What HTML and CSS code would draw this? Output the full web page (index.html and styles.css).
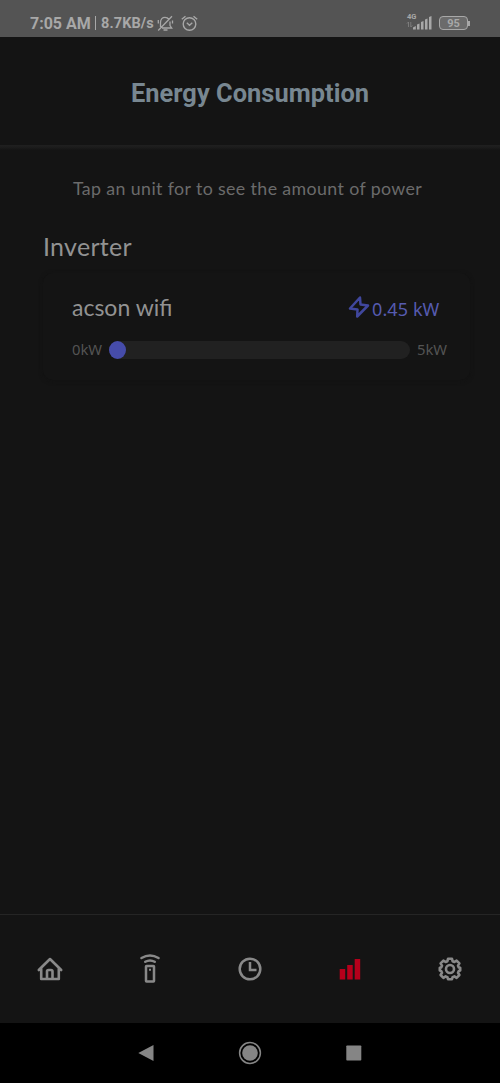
FILE: index.html
```html
<!DOCTYPE html>
<html lang="en">
<head>
<meta charset="utf-8">
<title>Energy Consumption</title>
<link rel="stylesheet" href="styles.css">
</head>
<body>
<div class="screen">
  <div class="status">
    <span class="time">7:05 AM</span><span class="sep"></span><span class="speed">8.7KB/s</span>
    <svg class="bell" width="17" height="17" viewBox="0 0 17 17" fill="none" stroke="#a8a8a8" stroke-width="1.3"><path d="M3.5 12V7.5C3.5 4 5.5 2.3 8 2.3c1.600 0 3 .7 3.800 2M13 6.500V10.500l1.700 2.500H5M6.500 15h4M15 1.200L1.200 15.500M1.300 5v3.500M15.500 5.500v3"/></svg>
    <svg class="alarm" width="17" height="17" viewBox="0 0 17 17" fill="none" stroke="#a8a8a8" stroke-width="1.400"><circle cx="8.500" cy="9" r="6.300"/><path d="M.8 4.200L4.500 1.200M16.200 4.200L12.500 1.200M5.800 7.800l2.700 2.400 2.800-2.400"/></svg>
    <div class="network"><span class="gen">4G</span>
      <svg width="8" height="7" viewBox="0 0 8 7" fill="none" stroke="#858585" stroke-width=".8"><path d="M2.500 6V1L1 2.500M4.800 1v5l1.500-1.500"/></svg>
    </div>
    <svg class="signal" width="19" height="14" viewBox="0 0 19 14" fill="#a8a8a8"><path d="M0 11.500l2.800-1.500v3.500H0zM4 8.500l2.500-1v6H4zM8 6l2.500-1v8.500H8zM12 3.500l2.500-1v11H12zM16 1l2.500-1v13.500H16z"/></svg>
    <div class="battery"><span class="level">95</span></div><span class="battery-tip"></span>
  </div>
  <header class="header"><h1 class="title">Energy Consumption</h1></header>
  <main class="content">
    <p class="hint">Tap an unit for to see the amount of power</p>
    <h2 class="group">Inverter</h2>
    <section class="card">
      <div class="unit">
        <span class="name">acson wifi</span>
        <svg class="bolt" width="22" height="22" viewBox="0 0 22 22" fill="none" stroke="#40479d" stroke-width="2.500" stroke-linejoin="round"><path d="M12 1.500L2 12.500l7.500 1-.3 7L20 9.500l-7.500-1z"/></svg>
        <span class="power">0.45 kW</span>
      </div>
      <div class="usage">
        <span class="min">0kW</span>
        <div class="track"><div class="fill"></div></div>
        <span class="max">5kW</span>
      </div>
    </section>
  </main>
  <nav class="tabs">
    <div class="tab"><svg width="28" height="28" viewBox="0 0 28 28" fill="none" stroke="#898989" stroke-width="2.600" stroke-linecap="round" stroke-linejoin="round"><path d="M2.800 15L14 4l11.200 11M5.200 13.500V24h17.600V13.500M11 24v-7.500q0-1.500 1.500-1.500h2.500q1.500 0 1.500 1.500V24"/></svg></div>
    <div class="tab"><svg width="28" height="32" viewBox="0 0 28 32" fill="none" stroke="#898989" stroke-width="2.500"><path d="M5.500 5q8.500-5 17 0M9.300 8.800q4.700-2.800 9.400 0" stroke-linecap="round"/><rect x="10" y="13" width="8" height="15.500" rx=".5"/><path d="M14 15.800v2" stroke-width="2"/></svg></div>
    <div class="tab"><svg width="28" height="28" viewBox="0 0 28 28" fill="none" stroke="#898989" stroke-width="2.500"><circle cx="14" cy="14" r="10.300"/><path d="M14 7v8h6.500" stroke-width="2.500"/></svg></div>
    <div class="tab"><svg width="28" height="28" viewBox="0 0 28 28" fill="#b5001b"><path d="M3.700 14h5.500v10.500H3.700zM11.200 10h5.500v14.500h-5.500zM18.700 4h5.500v20.500h-5.500z"/></svg></div>
    <div class="tab"><svg width="28" height="28" viewBox="0 0 28 28" fill="none" stroke="#898989" stroke-width="2.600" stroke-linejoin="round"><path d="M12 3.800h4l.6 2.400 1.800.8 2.200-1.400 2.800 2.800L22 10.600l.8 1.800 1.400.4v2.800l-1.400.4-.8 1.800 1.400 2.200-2.800 2.800-2.200-1.400-1.800.8-.6 2h-4l-.6-2-1.800-.8-2.200 1.400L4.600 20 6 17.800 5.200 16l-1.400-.4v-2.800l1.400-.4.8-1.800-1.400-2.200 2.800-2.800L9.600 7l1.800-.8z"/><circle cx="14" cy="14" r="4"/></svg></div>
  </nav>
  <div class="system">
    <svg width="16" height="18" viewBox="0 0 16 18" fill="#858585"><path d="M15.500 1v16L.3 9z"/></svg>
    <svg width="24" height="24" viewBox="0 0 24 24"><circle cx="12" cy="12" r="10.400" fill="none" stroke="#858585" stroke-width="1.500"/><circle cx="12" cy="12" r="7.800" fill="#858585"/></svg>
    <svg width="16" height="16" viewBox="0 0 16 16"><rect x=".3" y=".5" width="15" height="15" rx=".8" fill="#858585"/></svg>
  </div>
</div>
</body>
</html>
```
FILE: styles.css
```css
* { box-sizing: border-box; }
body { margin: 0; background: #141414; font-family: Lato, sans-serif; }
.screen { width: 500px; height: 1083px; display: flex; flex-direction: column; background: #141414; overflow: hidden; }
.status { height: 37px; flex: none; display: flex; align-items: center; padding: 9px 30px 0 30px; background: #545454; color: #a8a8a8; font-family: Roboto, sans-serif; font-weight: 700; white-space: nowrap; }
.time { width: 61px; font-size: 16px; }
.sep { width: 1px; height: 14px; margin: 0 5px 0 4px; background: #a8a8a8; }
.speed { width: 53px; font-size: 14.500px; letter-spacing: .1px; }
.bell { margin-left: 3px; }
.alarm { margin-left: 7px; }
.network { display: flex; flex-direction: column; width: 12px; margin-left: auto; margin-top: -5px; }
.gen { font-size: 7.500px; line-height: 8px; padding-left: 1px; }
.signal { margin-left: -5px; margin-right: 7px; margin-top: -1px; }
.battery { display: flex; align-items: center; justify-content: center; width: 29px; height: 14px; border: 1.500px solid #a8a8a8; border-radius: 4px; background: #6b6b6b; font-size: 11px; }
.level { line-height: 11px; padding-top: 1px; }
.battery-tip { width: 2px; height: 5px; background: #a8a8a8; }
.header { height: 108px; flex: none; display: flex; justify-content: center; padding-top: 41px; }
.title { margin: 0; font: 700 25.400px/30px Roboto, sans-serif; letter-spacing: .04px; color: #788791; white-space: nowrap; }
.content { flex: 1; padding: 33px 30px 0 43px; background: linear-gradient(#202020 0, #1d1d1d 2px, #171717 4px, #141414 5px); }
.hint { margin: 0 0 0 30px; font-size: 17.800px; line-height: 20px; letter-spacing: .38px; color: #6b6b6b; white-space: nowrap; }
.group { margin: 33px 0 0; font-weight: 400; font-size: 25px; line-height: 30px; letter-spacing: .3px; color: #929292; }
.card { height: 107px; margin-top: 12px; padding: 18px 22px 0 29px; border-radius: 10px; background: #141414; box-shadow: 0 1px 4px #121212; }
.unit { display: flex; align-items: center; height: 32px; padding-right: 7px; }
.name { flex: 1; font-size: 23px; color: #929292; }
.bolt { margin-right: 2px; }
.power { width: 69px; padding-top: 3px; font-family: "Noto Sans", sans-serif; font-size: 18px; letter-spacing: .1px; color: #565bb0; white-space: nowrap; }
.usage { display: flex; align-items: center; height: 18px; margin-top: 18px; font-family: "Noto Sans", sans-serif; font-size: 14.800px; line-height: 18px; color: #535353; white-space: nowrap; }
.min { width: 37px; margin-top: -2px; }
.track { width: 301px; height: 18px; border-radius: 9px; background: #212121; }
.fill { width: 17px; height: 18px; border-radius: 50%; background: #464caa; }
.max { margin-left: 7px; margin-top: -2px; }
.tabs { display: flex; flex: none; height: 109px; border-top: 1px solid #252525; }
.tab { flex: 1; display: flex; align-items: center; justify-content: center; }
.system { height: 60px; flex: none; display: grid; grid-template-columns: 16px 24px 16px; justify-content: center; column-gap: 84px; align-items: center; background: #000; }
```
